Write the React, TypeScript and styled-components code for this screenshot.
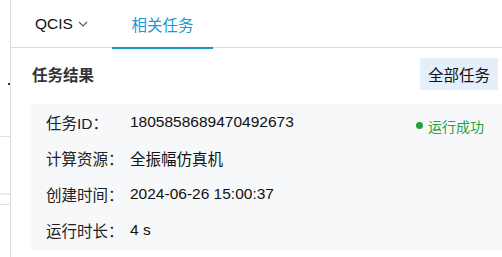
import React from "react";
import styled, { createGlobalStyle } from "styled-components";

const GlobalStyle = createGlobalStyle`
  html, body {
    margin: 0;
    padding: 0;
    background: #fff;
    font-family: "Liberation Sans", "Noto Sans CJK SC", Arial, sans-serif;
    color: #222;
  }
`;

const rows = [
  { label: "任务ID：", value: "1805858689470492673" },
  { label: "计算资源：", value: "全振幅仿真机" },
  { label: "创建时间：", value: "2024-06-26 15:00:37" },
  { label: "运行时长：", value: "4 s" },
];

const App: React.FC = () => {
  return (
    <>
      <GlobalStyle />
      <Page>
        <SideStrip>
          <Tick />
          <StripLine $top={136} />
          <StripBand $top={193} />
          <StripLine $top={204} />
        </SideStrip>
        <Main>
          <TabBar>
            <Tab>
              QCIS
              <Chevron viewBox="0 0 10 6">
                <path d="M1 1l4 4 4-4" fill="none" stroke="#555" strokeWidth="1.1" />
              </Chevron>
            </Tab>
            <Tab $active>相关任务</Tab>
          </TabBar>
          <Header>
            <Title>任务结果</Title>
            <AllButton>全部任务</AllButton>
          </Header>
          <Card>
            {rows.map((r, i) => (
              <Row key={r.label}>
                <Label>{r.label}</Label>
                <Value>{r.value}</Value>
                {i === 0 && (
                  <Status>
                    <Dot />
                    运行成功
                  </Status>
                )}
              </Row>
            ))}
          </Card>
        </Main>
      </Page>
    </>
  );
};

export default App;

const Page = styled.div`
  display: flex;
  width: 502px;
  height: 257px;
  overflow: hidden;
`;

const SideStrip = styled.div`
  position: relative;
  width: 10px;
  flex-shrink: 0;
  border-right: 1px solid #dcdcdc;
`;

const Tick = styled.div`
  position: absolute;
  left: 8px;
  top: 83px;
  width: 2px;
  height: 2px;
  background: #333;
`;

const StripLine = styled.div<{ $top: number }>`
  position: absolute;
  left: 0;
  right: 0;
  top: ${(p) => p.$top}px;
  height: 1px;
  background: #e2e2e2;
`;

const StripBand = styled.div<{ $top: number }>`
  position: absolute;
  left: 0;
  right: 0;
  top: ${(p) => p.$top}px;
  height: 2px;
  background: #ececec;
`;

const Main = styled.div`
  flex: 1;
  display: flex;
  flex-direction: column;
  min-width: 0;
`;

const TabBar = styled.div`
  display: flex;
  height: 48px;
  border-bottom: 1px solid #dcdcdc;
  box-sizing: border-box;
`;

const Tab = styled.div<{ $active?: boolean }>`
  width: 101px;
  display: flex;
  align-items: center;
  justify-content: center;
  gap: 5px;
  font-size: 15.5px;
  padding-top: 1px;
  color: ${(p) => (p.$active ? "#1b9bd4" : "#111")};
  border-bottom: 2px solid ${(p) => (p.$active ? "#1b94c8" : "transparent")};
  margin-bottom: -2px;
`;

const Chevron = styled.svg`
  width: 10px;
  height: 6px;
`;

const Header = styled.div`
  display: flex;
  align-items: center;
  justify-content: space-between;
  padding: 10px 4px 14px 21px;
`;

const Title = styled.div`
  font-size: 15.5px;
  font-weight: bold;
  color: #333;
`;

const AllButton = styled.button`
  width: 78px;
  height: 32px;
  border: none;
  background: #e5eefb;
  color: #111;
  font-family: inherit;
  font-size: 15.5px;
  padding: 0;
  cursor: pointer;
`;

const Card = styled.div`
  margin-left: 20px;
  background: #f7f8fa;
  padding: 0 18px 3px 15px;
`;

const Row = styled.div`
  display: flex;
  align-items: center;
  height: 36px;
  font-size: 15.5px;
`;

const Label = styled.div`
  width: 84px;
  color: #222;
`;

const Value = styled.div`
  flex: 1;
  color: #111;
`;

const Status = styled.div`
  display: flex;
  align-items: center;
  gap: 5px;
  font-size: 14px;
  color: #23a339;
  padding-top: 7px;
`;

const Dot = styled.span`
  width: 7px;
  height: 7px;
  border-radius: 50%;
  background: #22a03a;
`;
